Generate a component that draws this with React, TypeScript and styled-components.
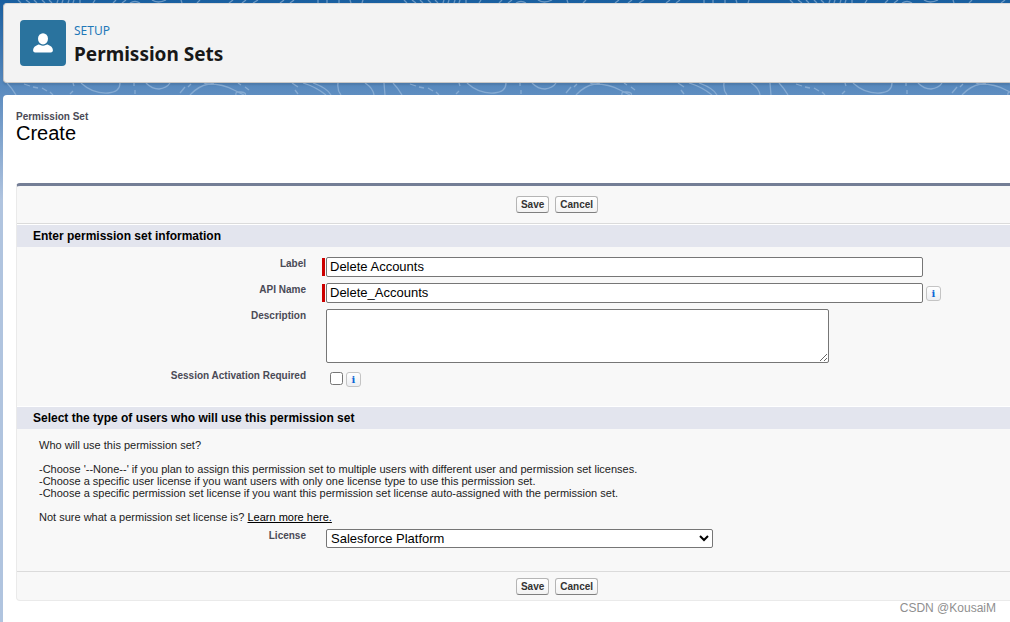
import React, { useId, useState } from "react";
import styled, { createGlobalStyle } from "styled-components";

const GlobalStyle = createGlobalStyle`
  *, *::before, *::after { box-sizing: border-box; }
  html, body { margin: 0; padding: 0; }
  body { font-family: "Liberation Sans", Arial, sans-serif; color: #000; }
`;

const Page = styled.div`
  display: flex;
  flex-direction: column;
  min-height: 100vh;
  padding-left: 3px;
  background: linear-gradient(180deg, #195fa0 0, #5b8bbf 90px, #b0c4df 200px);
  overflow: hidden;
`;

const Strip = styled.svg<{ $height: number }>`
  display: block;
  width: 100%;
  height: ${(p) => p.$height}px;
  fill: none;
  stroke: #a9c4e2;
  stroke-opacity: 0.55;
  stroke-width: 1.3;
`;

const Header = styled.header`
  display: flex;
  align-items: flex-start;
  gap: 8px;
  height: 80px;
  padding: 16px;
  background: #f3f3f3;
  border: 1px solid #c9c7c5;
  border-top-color: #dddbda;
  border-right: 0;
  border-radius: 4px 0 0 4px;
  box-shadow: 0 2px 2px rgba(0, 0, 0, 0.1);
`;

const HeaderIcon = styled.div`
  display: grid;
  place-items: center;
  width: 46px;
  height: 46px;
  border-radius: 4px;
  background: #2a739e;
`;

const HeaderTitle = styled.h1`
  display: flex;
  flex-direction: column;
  margin: 0;
  padding-top: 2px;
  font-family: "Noto Sans", "Open Sans", sans-serif;
  font-size: 19px;
  line-height: 28px;
  font-weight: 700;
  color: #181818;
`;

const Eyebrow = styled.span`
  font-size: 12px;
  line-height: 18px;
  font-weight: 400;
  color: #1f78b8;
`;

const Panel = styled.main`
  flex: 1;
  display: flex;
  flex-direction: column;
  padding: 16px 0 0 13px;
  background: #fff;
  border-radius: 4px 0 0 0;
`;

const PageTitle = styled.h2`
  display: flex;
  flex-direction: column;
  margin: 0 0 40px;
  font-size: 20px;
  line-height: 20px;
  font-weight: 400;
`;

const PageType = styled.span`
  font-size: 10px;
  line-height: 12px;
  font-weight: 700;
  color: #4a4a56;
`;

const Block = styled.form`
  background: #f8f8f8;
  border-left: 1px solid #eaeaea;
  border-bottom: 1px solid #eaeaea;
  border-top: 3px solid #747e96;
  border-radius: 4px 0 0 4px;
`;

const ButtonRow = styled.div<{ $bottom?: boolean }>`
  display: flex;
  justify-content: center;
  gap: 6px;
  padding: ${(p) => (p.$bottom ? "6px 0 5px 87px" : "10px 0 10px 87px")};
  border: 0 solid #dbdbdb;
  border-width: ${(p) => (p.$bottom ? "1px 0 0" : "0 0 1px")};
`;

const Button = styled.button`
  height: 17px;
  padding: 0 4px;
  border: 1px solid #b5b5b5;
  border-bottom-color: #7f7f7f;
  border-radius: 3px;
  background: linear-gradient(#fff, #f3f3f3);
  font: 700 10px/14px "Liberation Sans", Arial, sans-serif;
  color: #333;
`;

const SectionTitle = styled.h3`
  margin: 0;
  padding: 0 16px;
  border-top: 1px solid #fff;
  background: #e3e5ee;
  font-size: 12px;
  line-height: 22px;
  font-weight: 700;
`;

const Fields = styled.div`
  display: flex;
  flex-direction: column;
  gap: 6px;
  padding: 10px 0 19px;
`;

const Row = styled.div`
  display: grid;
  grid-template-columns: 289px minmax(0, 1fr);
  column-gap: 20px;
  align-items: start;
  padding-right: 16px;
`;

const FieldLabel = styled.label`
  font-size: 10px;
  line-height: 13px;
  font-weight: 700;
  color: #4a4a56;
  text-align: right;
`;

const Control = styled.div<{ $required?: boolean }>`
  display: flex;
  align-items: center;
  gap: 3px;
  margin-left: ${(p) => (p.$required ? "-4px" : "0")};
`;

const RequiredBar = styled.span`
  flex: none;
  width: 3px;
  height: 18px;
  margin-right: -2px;
  background: #c00;
`;

const TextInput = styled.input`
  flex: 0 1 597px;
  min-width: 0;
  height: 20px;
  padding: 0 3px 1px;
  border: 1px solid #767676;
  border-radius: 2px;
  background: #fff;
  font: 13px/17px "Liberation Sans", Arial, sans-serif;
  color: #000;
`;

const TextArea = styled.textarea`
  flex: 0 1 503px;
  min-width: 0;
  height: 54px;
  padding: 2px 3px;
  border: 1px solid #767676;
  border-radius: 2px;
  background: #fff;
  font: 13px/16px "Liberation Sans", Arial, sans-serif;
`;

const CheckBox = styled.input`
  width: 13px;
  height: 13px;
  margin: 0 0 2px 4px;
`;

const CheckControl = styled(Control)`
  padding-top: 3px;
`;

const Select = styled.select`
  flex: 0 1 387px;
  min-width: 0;
  height: 19px;
  padding: 0;
  border: 1px solid #767676;
  border-radius: 2px;
  background: #fff;
  font: 13px/17px "Liberation Sans", Arial, sans-serif;
  color: #000;
`;

const InfoButton = styled.button`
  display: grid;
  place-items: center;
  flex: none;
  width: 15px;
  height: 15px;
  padding: 0;
  border: 1px solid #c4c4c4;
  border-radius: 3px;
  background: linear-gradient(#fff, #eceef2);
  font: 700 10px/13px "DejaVu Serif", serif;
  color: #0b66d6;
`;

const Notes = styled.div`
  display: flex;
  flex-direction: column;
  gap: 12px;
  padding: 10px 22px 6px;
  font-size: 11px;
  line-height: 12px;
  color: #222;
`;

const Note = styled.p`
  margin: 0;
`;

const NoteList = styled.ul`
  margin: 0;
  padding: 0;
  list-style: none;
`;

const Link = styled.a`
  color: #000;
  text-decoration: underline;
`;

const LicenseRow = styled(Row)`
  padding-bottom: 23px;
`;

const Credit = styled.footer`
  padding-right: 14px;
  font-size: 12px;
  line-height: 14px;
  color: #8f8f8f;
  text-align: right;
`;

const TopStrip = () => {
  const id = useId();
  return (
    <Strip $height={3} aria-hidden="true">
      <defs>
        <pattern id={id} x="-3" width="386" height="3" patternUnits="userSpaceOnUse">
          <path d="M18 0l3 3M26 0l4 3M34 0l3 3M42 0l3 3M49 0l3 3M57 3l1-3M62 3l1-3M68 3l1-3M73 3l1-3M80 3V0M93 3l2-3M113 3l3-3M122 3l4-3M130 3q5-3 10 0M152 0q6 4 14 0M181 0l1 3M197 3l3-3M229 3l4-3M242 3l4-3M253 3l5-3M280 3l4-3M290 3l4-3M318 0v3M327 0v3M339 3V0M350 0l1 3M363 0l-1 3" />
        </pattern>
      </defs>
      <rect width="100%" height="3" fill={`url(#${id})`} stroke="none" />
    </Strip>
  );
};

const GapStrip = () => {
  const id = useId();
  return (
    <Strip $height={12} aria-hidden="true">
      <defs>
        <pattern id={id} x="-3" width="386" height="12" patternUnits="userSpaceOnUse">
          <path d="M7 0q5 5 9 12M24 1l6 2M33 4l5 1M42 5l5 3M50 9l3 3M73 0l1 3M73 8l-3 3M81 0q12 11 27 10q12-1 12-10M134 0v3M135 7v4M146 0q6 6 13 6q8-1 11-6M180 10l5-6M188 4l3-3M190 12q8-9 19-11q14 0 25 6l10 5M204 0q4 2 10 0M236 12q-1-4 5-3t4 3M238 0l3 2M245 4l4 3M292 0l6 4M295 7l3 4M303 0q13 4 23 12M313 0q14 5 18 12M338 0q-1 7 3 12M365 0q8 5 9 12M384 0l1 12" />
        </pattern>
      </defs>
      <rect width="100%" height="12" fill={`url(#${id})`} stroke="none" />
    </Strip>
  );
};

const Actions = ({ bottom }: { bottom?: boolean }) => (
  <ButtonRow $bottom={bottom}>
    <Button type="submit">Save</Button>
    <Button type="button">Cancel</Button>
  </ButtonRow>
);

export default function App() {
  const [label, setLabel] = useState("Delete Accounts");
  const [apiName, setApiName] = useState("Delete_Accounts");

  return (
    <>
      <GlobalStyle />
      <Page>
        <TopStrip />
        <Header>
          <HeaderIcon>
            <svg width="20" height="20" viewBox="0 0 20 20" fill="#fff" aria-hidden="true">
              <ellipse cx="10" cy="5.8" rx="5" ry="5.6" />
              <path d="M5 11.700c.9-.4 1.500-.2 2.200.3 1.800 1.100 3.800 1.100 5.600 0 .7-.5 1.300-.7 2.200-.3 2.900 1 4.700 2.700 4.900 5.300.1 1.600-.7 2.400-2.100 2.400H2.200C.8 19.400 0 18.600.1 17c.2-2.600 2-4.300 4.900-5.300z" />
            </svg>
          </HeaderIcon>
          <HeaderTitle>
            <Eyebrow>SETUP</Eyebrow>
            Permission Sets
          </HeaderTitle>
        </Header>
        <GapStrip />
        <Panel>
          <PageTitle>
            <PageType>Permission Set</PageType>
            Create
          </PageTitle>
          <Block onSubmit={(e) => e.preventDefault()}>
            <Actions />
            <SectionTitle>Enter permission set information</SectionTitle>
            <Fields>
              <Row>
                <FieldLabel htmlFor="label">Label</FieldLabel>
                <Control $required>
                  <RequiredBar />
                  <TextInput id="label" type="text" required value={label} onChange={(e) => setLabel(e.target.value)} />
                </Control>
              </Row>
              <Row>
                <FieldLabel htmlFor="api-name">API Name</FieldLabel>
                <Control $required>
                  <RequiredBar />
                  <TextInput id="api-name" type="text" required value={apiName} onChange={(e) => setApiName(e.target.value)} />
                  <InfoButton type="button">i</InfoButton>
                </Control>
              </Row>
              <Row>
                <FieldLabel htmlFor="description">Description</FieldLabel>
                <Control>
                  <TextArea id="description" />
                </Control>
              </Row>
              <Row>
                <FieldLabel htmlFor="session">Session Activation Required</FieldLabel>
                <CheckControl>
                  <CheckBox id="session" type="checkbox" />
                  <InfoButton type="button">i</InfoButton>
                </CheckControl>
              </Row>
            </Fields>
            <SectionTitle>Select the type of users who will use this permission set</SectionTitle>
            <Notes>
              <Note>Who will use this permission set?</Note>
              <NoteList>
                <li>-Choose '--None--' if you plan to assign this permission set to multiple users with different user and permission set licenses.</li>
                <li>-Choose a specific user license if you want users with only one license type to use this permission set.</li>
                <li>-Choose a specific permission set license if you want this permission set license auto-assigned with the permission set.</li>
              </NoteList>
              <Note>
                Not sure what a permission set license is? <Link href="#license-help">Learn more here.</Link>
              </Note>
            </Notes>
            <LicenseRow>
              <FieldLabel htmlFor="license">License</FieldLabel>
              <Control>
                <Select id="license" defaultValue="platform">
                  <option value="none">--None--</option>
                  <option value="platform">Salesforce Platform</option>
                </Select>
              </Control>
            </LicenseRow>
            <Actions bottom />
          </Block>
          <Credit>CSDN @KousaiM</Credit>
        </Panel>
      </Page>
    </>
  );
}
